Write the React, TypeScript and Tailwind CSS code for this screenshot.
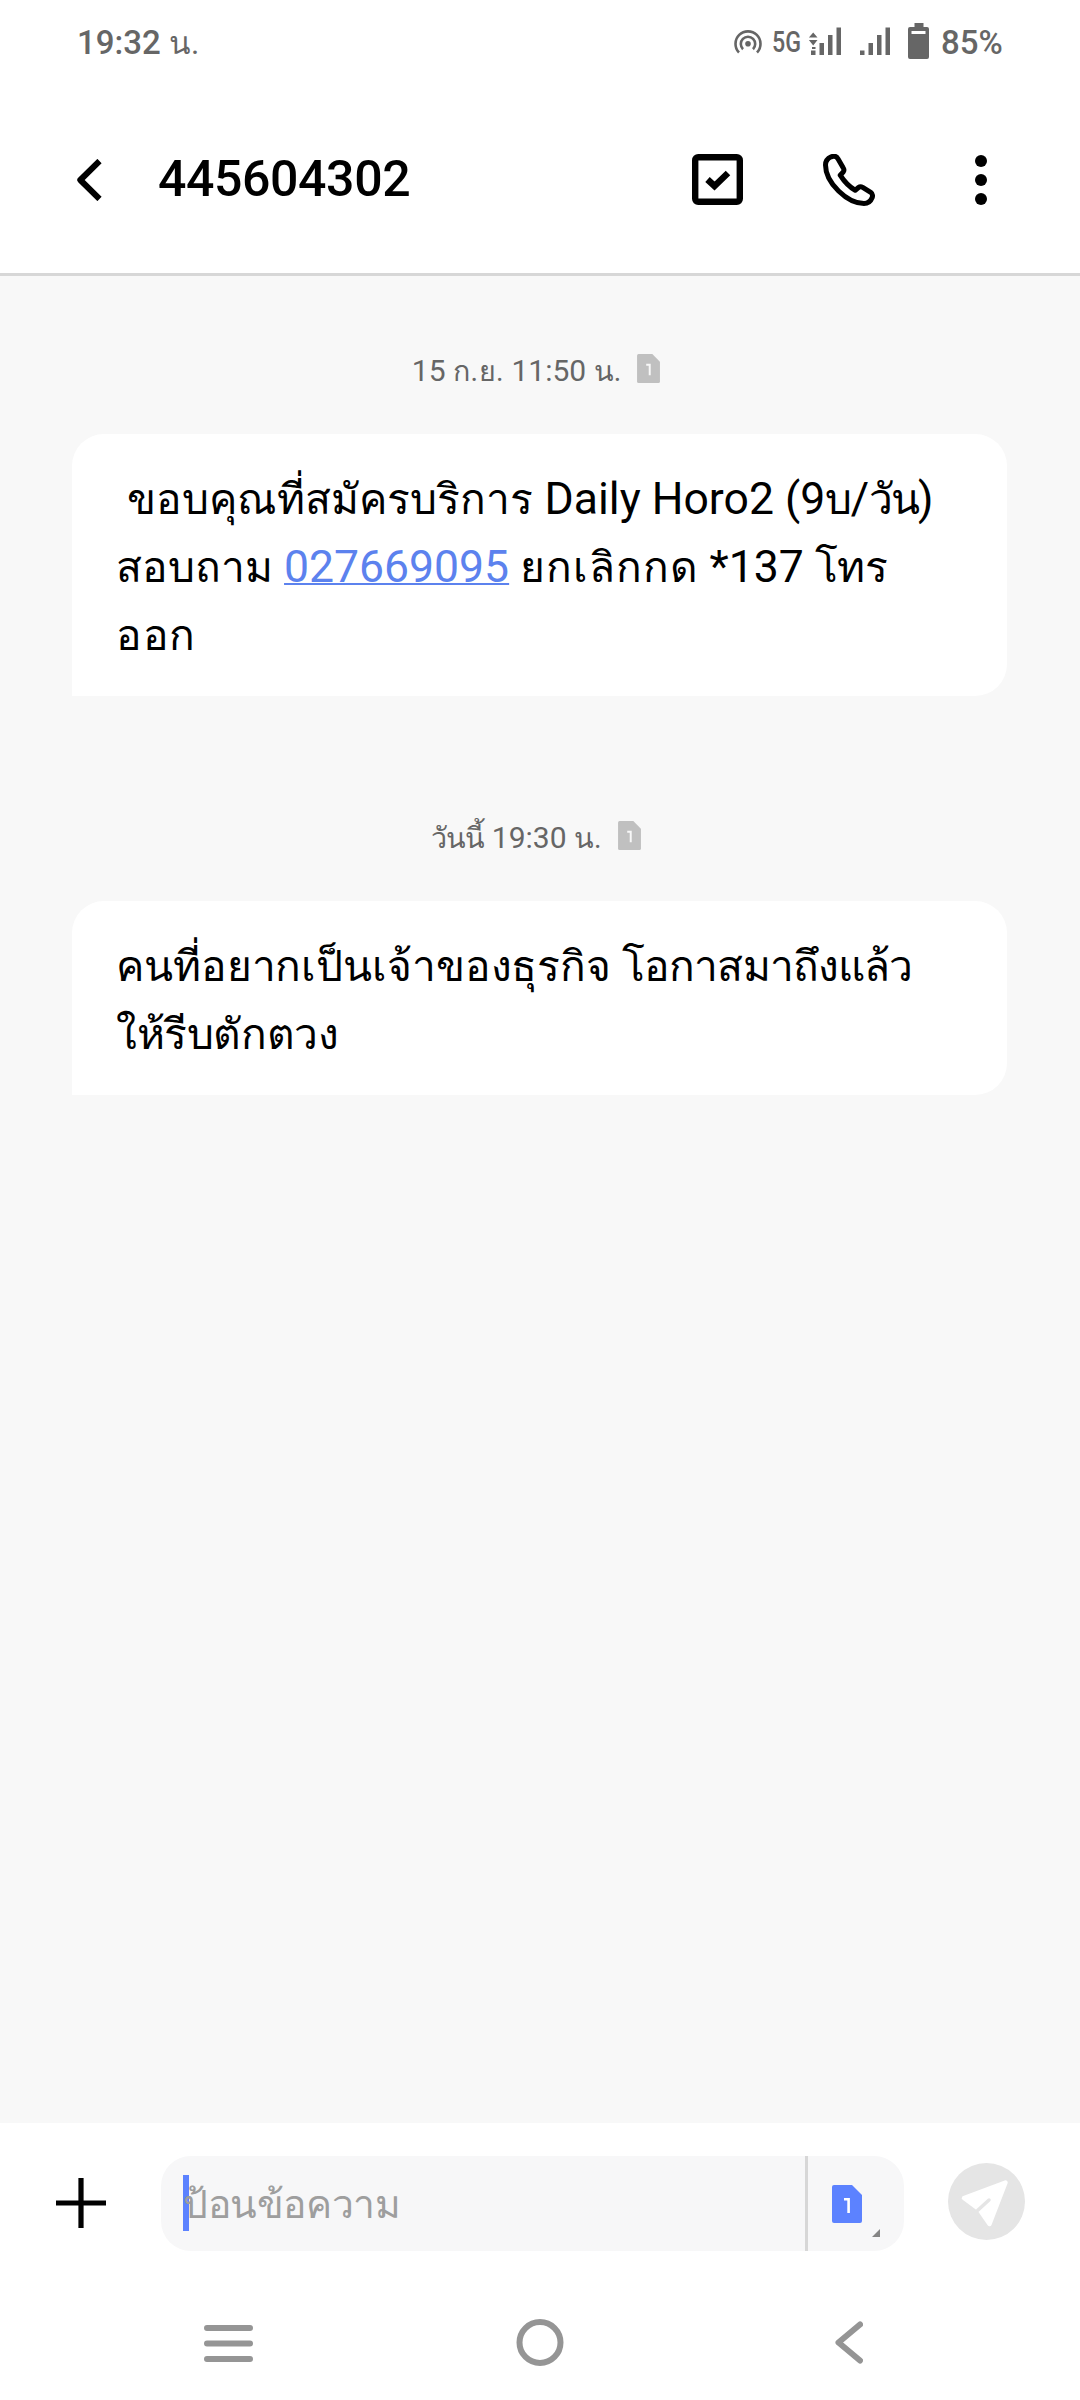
import type { ReactNode } from 'react';

const SimIcon = ({ className, digit = '#f8f8f8' }: { className: string; digit?: string }) => (
  <svg viewBox="0 0 30 38" className={className} fill="currentColor">
    <path d="M2 0H20L30 10V36a2 2 0 0 1-2 2H2a2 2 0 0 1-2-2V2a2 2 0 0 1 2-2Z" />
    <path d="M12 14.2h4.6V28" fill="none" stroke={digit} strokeWidth="2.6" />
  </svg>
);

// Thai glyphs run larger than Roboto at the same size
const Th = ({ children, className = '' }: { children: ReactNode; className?: string }) => (
  <span className={`text-[.955em] ${className}`}>{children}</span>
);

const SignalBars = ({ active = false }: { active?: boolean }) => (
  <svg viewBox="0 0 32 32" className="h-8 w-8 overflow-visible" fill="currentColor">
    <path d="M1 26.5h4.5V31H1zM9.5 19H14v12H9.5zM18 11h4.5v20H18zM26.5 3.5H31V31h-4.5z" />
    {active && <path d="M3.2 8.5 7.5 13.5h-8.6zM-1.1 16h8.6L3.2 21.5zM2 23h3.5v2H2z" />}
  </svg>
);

const StatusBar = () => (
  <div className="flex h-[84px] items-start justify-between pr-[75px] pl-[77px] text-[#666]">
    <span className="pt-[23px] text-[33px] leading-[40px] font-medium">
      19:32 <Th className="font-normal">น.</Th>
    </span>
    <div className="flex items-start">
      <svg viewBox="0 0 28 24" className="mt-[30px] h-6 w-7" fill="none" stroke="currentColor" strokeWidth="2.6">
        <path d="M5 22.5a12.5 12.5 0 1 1 18 0" />
        <path d="M9 19.2a7.2 7.2 0 1 1 10 0" />
        <circle cx="14" cy="13.8" r="2.8" fill="currentColor" stroke="none" />
      </svg>
      <span className="mt-[22px] ml-2.5 w-[27px] origin-left scale-x-[.8] text-[29px] leading-[40px] font-medium">5G</span>
      <div className="mt-6 ml-[11px]">
        <SignalBars active />
      </div>
      <div className="mt-6 ml-[17px]">
        <SignalBars />
      </div>
      <svg viewBox="0 0 21 36" className="mt-[23px] ml-[17px] h-9 w-[21px]" fill="currentColor">
        <path d="M6.5 0h9v4H19a2 2 0 0 1 2 2v28a2 2 0 0 1-2 2H2a2 2 0 0 1-2-2V6a2 2 0 0 1 2-2h4.5z" />
        <path d="M3.5 8h14v3h-14z" fill="#fff" />
      </svg>
      <span className="mt-[23px] ml-[12px] w-[64px] text-[33px] leading-[40px] font-medium">85%</span>
    </div>
  </div>
);

const ChatHeader = () => (
  <header className="flex h-[192px] items-center border-b-3 border-[#d7d7d7] pt-0.5 pl-[76px]">
    <svg viewBox="0 0 26 42" className="h-[42px] w-[26px]" fill="none" stroke="#000" strokeWidth="6">
      <path d="M23.5 2 4.3 21l19.2 19" strokeLinejoin="round" />
    </svg>
    <h1 className="mb-0.5 ml-[56px] w-[534px] text-[50px] leading-[60px] font-medium tracking-[-0.4px]">445604302</h1>
    <svg viewBox="0 0 51 51" className="h-[51px] w-[51px]" fill="none" stroke="#000">
      <rect x="3.2" y="3.2" width="44.6" height="44.6" rx="3" strokeWidth="6.4" />
      <path d="m15.5 25.5 7 6.5L36 19" strokeWidth="6.5" />
    </svg>
    <svg viewBox="0 0 52 52" className="ml-20 h-[52px] w-[52px]" fill="none" stroke="#000" strokeWidth="5" strokeLinejoin="round">
      <path d="M8.2 2.8C5 4.2 2.5 7.5 2.5 11c0 18 22 38.5 38.5 38.5 3.5 0 6.8-2.5 8.2-6 .6-2 .2-4-1.5-5.2l-8-5c-1.4-.8-3-.8-4.2.2l-3.3 2.7c-5-2.7-11-8.7-15-15l3-3.2c.9-1.2.9-2.7.1-4l-5.2-9C13.7 2.5 11.5 1.5 8.2 2.8Z" />
    </svg>
    <svg viewBox="0 0 12 52" className="ml-[100px] h-[52px] w-3" fill="#000">
      <circle cx="6" cy="7" r="6" />
      <circle cx="6" cy="26" r="6" />
      <circle cx="6" cy="45" r="6" />
    </svg>
  </header>
);

const DateLabel = ({ children }: { children: ReactNode }) => (
  <div className="flex h-10 items-start justify-center pr-[8px] text-[#666]">
    <span className="text-[30px] leading-[40px]">{children}</span>
    <SimIcon className="mt-[3px] ml-4 h-[29px] w-[23px] text-[#c0c0c0]" />
  </div>
);

const Bubble = ({ children }: { children: ReactNode }) => (
  <div className="mr-[73px] ml-[72px] rounded-[32px] rounded-bl-none bg-white pt-[31px] pb-[27px] pl-11 text-[44.5px] leading-[68px] whitespace-pre *:h-[68px]">
    {children}
  </div>
);

const Composer = () => (
  <div className="flex h-[151px] items-start bg-white pt-[33px] pl-14">
    <svg viewBox="0 0 50 50" className="mt-[22px] h-[50px] w-[50px]" stroke="#000" strokeWidth="5.2">
      <path d="M25 0v50M0 25h50" />
    </svg>
    <div className="ml-[55px] flex h-[95px] w-[743px] rounded-[30px] bg-[#f7f7f8]">
      <div className="relative flex w-[644px] items-center pt-0.5 pl-[22px]">
        <span className="absolute top-[19px] left-[22px] h-14 w-1.5 bg-[#5c82ff]" />
        <span className="relative text-[39px] leading-[60px] tracking-[-.4px] text-[#9e9e9e]">ป้อนข้อความ</span>
      </div>
      <div className="relative w-[99px] border-l-3 border-[#d7d7d7] pt-[29px] pl-6">
        <SimIcon className="h-[38px] w-[30px] text-[#5c82ff]" digit="#fff" />
        <svg viewBox="0 0 8 8" className="absolute right-6 bottom-3.5 h-2 w-2" fill="#858585">
          <path d="M8 0v8H0z" />
        </svg>
      </div>
    </div>
    <svg viewBox="0 0 77 77" className="mt-[7px] ml-11 h-[77px] w-[77px]">
      <circle cx="38.5" cy="38.5" r="38.5" fill="#e5e5e5" />
      <path d="M16 35 57.5 19.5 41.5 61 31.5 46.5Z" fill="#fff" stroke="#fff" strokeWidth="4.5" strokeLinejoin="round" />
      <path d="M29.5 47.5 41 37" stroke="#e5e5e5" strokeWidth="3.5" strokeLinecap="round" />
    </svg>
  </div>
);

const NavBar = () => (
  <nav className="flex h-[126px] items-start bg-white pt-11 pl-[204px] text-[#959595]">
    <svg viewBox="0 0 49 48" className="h-12 w-[49px]" stroke="currentColor" strokeWidth="6" strokeLinecap="round">
      <path d="M3 10h43M3 25.5h43M3 41h43" />
    </svg>
    <svg viewBox="0 0 48 48" className="ml-[263px] h-12 w-12" fill="none" stroke="currentColor" strokeWidth="6">
      <circle cx="24" cy="24.5" r="20.5" />
    </svg>
    <svg viewBox="0 0 28 48" className="ml-[271px] h-12 w-7" fill="none" stroke="currentColor" strokeWidth="6" strokeLinecap="round" strokeLinejoin="round">
      <path d="M25 6.5 3.5 24.5 25 42.5" />
    </svg>
  </nav>
);

const App = () => {
  return (
    <div className="flex h-[2400px] w-[1080px] flex-col overflow-hidden bg-white font-[Roboto,sans-serif] text-black">
      <StatusBar />
      <ChatHeader />

      {/* Messages */}
      <main className="flex-1 bg-[#f8f8f8] pt-[75px]">
        <DateLabel>
          15 <Th className="tracking-[.5px]">ก.ย.</Th> 11:50 <Th>น.</Th>
        </DateLabel>
        <div className="mt-[43px]">
          <Bubble>
            <p>
              {' '}<Th className="tracking-[.1px]">ขอบคุณที่สมัครบริการ</Th> Daily Horo2 (9<Th className="tracking-[-1.5px]">บ</Th>/<Th className="tracking-[-2px]">วัน</Th>)
            </p>
            <p>
              <Th>สอบถาม</Th> <a className="text-[#5c82ee] underline decoration-2">027669095</a> <Th className="tracking-[.9px]">ยกเลิกกด</Th> *137 <Th className="tracking-[-.5px]">โทร</Th>
            </p>
            <p><Th className="tracking-[.5px]">ออก</Th></p>
          </Bubble>
        </div>
        <div className="mt-[122px] mb-[43px]">
          <DateLabel>
            <Th className="tracking-[-1px]">วันนี้</Th> 19:30 <Th>น.</Th>
          </DateLabel>
        </div>
        <Bubble>
          <p><Th className="tracking-[-.1px]">คนที่อยากเป็นเจ้าของธุรกิจ</Th> <Th className="tracking-[-.9px]">โอกาสมาถึงแล้ว</Th></p>
          <p><Th className="tracking-[-.4px]">ให้รีบตักตวง</Th></p>
        </Bubble>
      </main>

      <Composer />
      <NavBar />
    </div>
  );
};

export default App;
